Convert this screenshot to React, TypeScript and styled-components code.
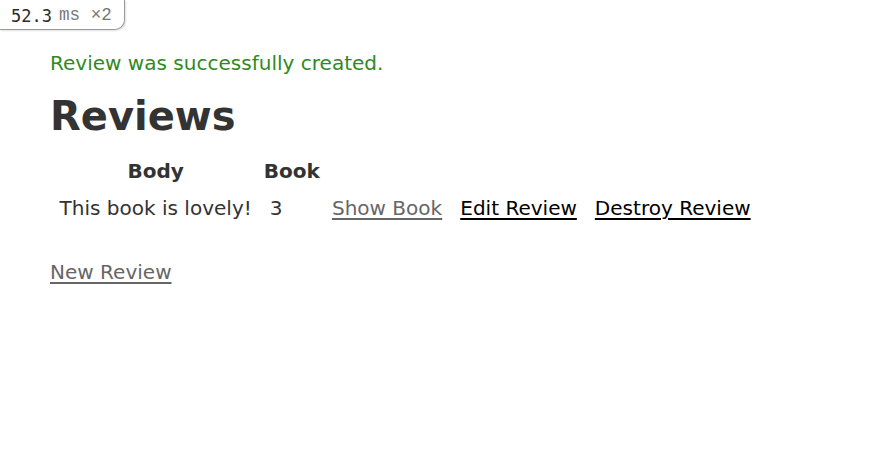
import React from "react";
import styled, { createGlobalStyle } from "styled-components";

const Global = createGlobalStyle`
  html, body { background: #fff; }
  body {
    margin: 50px;
    color: #333;
    font-family: "DejaVu Sans", Verdana, sans-serif;
    font-size: 20.05px;
    line-height: 27px;
  }
`;

const Badge = styled.div`
  position: absolute;
  top: 0;
  left: 0;
  height: 30px;
  box-sizing: border-box;
  width: 125px;
  padding: 3px 0 0 11px;
  display: flex;
  align-items: center;
  gap: 7px;
  background: #fff;
  border-right: 1.5px solid #999;
  border-bottom: 1.5px solid #999;
  border-bottom-right-radius: 10px;
  box-shadow: 1px 1px 2px rgba(0, 0, 0, 0.12);
  font-family: "DejaVu Sans Mono", "Liberation Mono", monospace;
  font-size: 17px;
  line-height: 1;
`;

const Time = styled.span`
  color: #2a2a2a;
`;

const Unit = styled.span`
  color: #777;
  font-family: "Liberation Mono", monospace;
  font-size: 17.6px;
  white-space: pre;
`;

const Notice = styled.p`
  color: #2f8a1e;
  margin: 0 0 19.5px;
`;

const Title = styled.h1`
  font-size: 40px;
  font-weight: bold;
  margin: 26px 0;
`;

const Table = styled.table`
  border-spacing: 3px;
  margin: -3px 0 -4px -1px;
`;

const Th = styled.th`
  padding: 1.5px 1.5px 7.5px;
  font-weight: bold;
`;

const Td = styled.td`
  padding: 0 7.5px 10.5px;
`;

const Link = styled.a<{ $visited?: boolean }>`
  color: ${(p) => (p.$visited ? "#666" : "#000")};
  text-decoration: underline;
  text-underline-offset: 3px;
  cursor: pointer;
`;

export default function App() {
  return (
    <>
      <Global />
      <Badge>
        <Time>52.3</Time>
        <Unit>ms ×2</Unit>
      </Badge>
      <Notice>Review was successfully created.</Notice>
      <Title>Reviews</Title>
      <Table>
        <thead>
          <tr>
            <Th>Body</Th>
            <Th>Book</Th>
            <Th colSpan={3}></Th>
          </tr>
        </thead>
        <tbody>
          <tr>
            <Td>This book is lovely!</Td>
            <Td>3</Td>
            <Td>
              <Link $visited>Show Book</Link>
            </Td>
            <Td>
              <Link>Edit Review</Link>
            </Td>
            <Td>
              <Link>Destroy Review</Link>
            </Td>
          </tr>
        </tbody>
      </Table>
      <br />
      <Link $visited>New Review</Link>
    </>
  );
}
